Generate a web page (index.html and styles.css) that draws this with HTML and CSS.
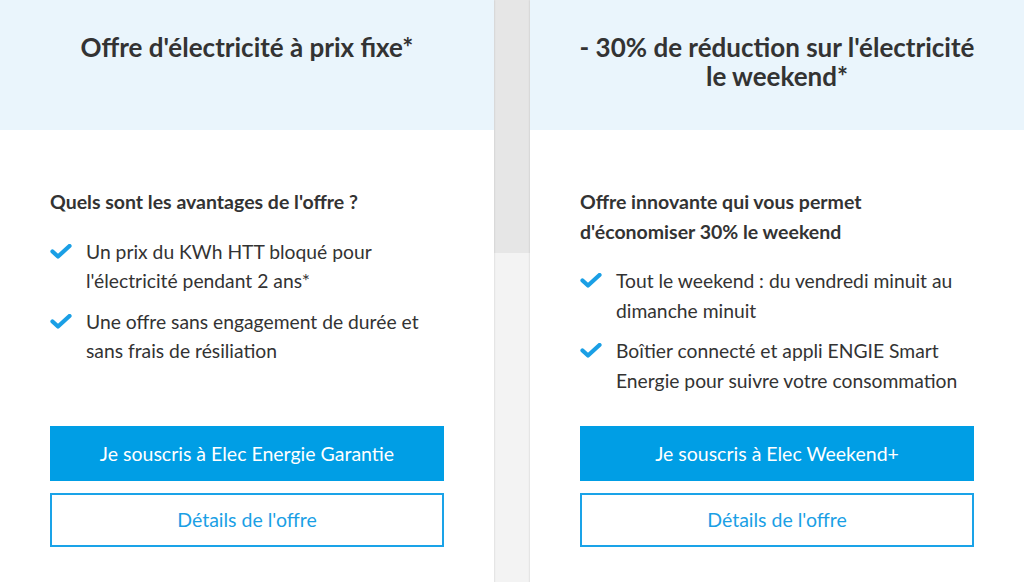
FILE: index.html
```html
<!DOCTYPE html>
<html lang="fr">
<head>
    <meta charset="UTF-8">
    <meta name="viewport" content="width=device-width, initial-scale=1.0">
    <title>Offres électricité</title>
    <link rel="stylesheet" href="styles.css">
</head>
<body>
    <div class="offers">
        <!-- offre prix fixe -->
        <div class="offer-card">
            <div class="offer-header">
                <h2>Offre d'électricité à prix fixe*</h2>
            </div>
            <div class="offer-body">
                <h3>Quels sont les avantages de l'offre ?</h3>
                <ul class="benefits">
                    <li>
                        <svg class="check" viewBox="0 0 22 15"><path d="M2.5 7.5l5.5 5 11.5-10.5"/></svg>
                        <span>Un prix du KWh HTT bloqué pour l'électricité pendant 2 ans*</span>
                    </li>
                    <li>
                        <svg class="check" viewBox="0 0 22 15"><path d="M2.5 7.5l5.5 5 11.5-10.5"/></svg>
                        <span>Une offre sans engagement de durée et sans frais de résiliation</span>
                    </li>
                </ul>
                <div class="actions">
                    <a class="btn btn-primary" href="#">Je souscris à Elec Energie Garantie</a>
                    <a class="btn btn-outline" href="#">Détails de l'offre</a>
                </div>
            </div>
        </div>

        <!-- offre weekend -->
        <div class="offer-card">
            <div class="offer-header">
                <h2>- 30% de réduction sur l'électricité le weekend*</h2>
            </div>
            <div class="offer-body">
                <h3>Offre innovante qui vous permet d'économiser 30% le weekend</h3>
                <ul class="benefits">
                    <li>
                        <svg class="check" viewBox="0 0 22 15"><path d="M2.5 7.5l5.5 5 11.5-10.5"/></svg>
                        <span>Tout le weekend : du vendredi minuit au dimanche minuit</span>
                    </li>
                    <li>
                        <svg class="check" viewBox="0 0 22 15"><path d="M2.5 7.5l5.5 5 11.5-10.5"/></svg>
                        <span>Boîtier connecté et appli ENGIE Smart Energie pour suivre votre consommation</span>
                    </li>
                </ul>
                <div class="actions">
                    <a class="btn btn-primary" href="#">Je souscris à Elec Weekend+</a>
                    <a class="btn btn-outline" href="#">Détails de l'offre</a>
                </div>
            </div>
        </div>
    </div>
</body>
</html>
```

FILE: styles.css
```css
/* page */
body {
    margin: 0;
    font-family: Lato, "Open Sans", Arial, sans-serif;
    color: #333;
    background-color: #f3f3f3;
}

/* two cards side by side, grey strip between */
.offers {
    display: flex;
    gap: 36px;
    background: linear-gradient(#e6e6e6 0, #e6e6e6 253px, #f3f3f3 253px);
}

.offer-card {
    flex: 0 0 494px;
    min-height: 600px;
    display: flex;
    flex-direction: column;
    background: white;
    box-shadow: 0 0 2px rgba(0, 0, 0, 0.18);
}

/* light blue title band */
.offer-header {
    height: 130px;
    box-sizing: border-box;
    padding: 33px 40px 0;
    background-color: #eaf5fc;
    text-align: center;
}

.offer-header h2 {
    margin: 0;
    font-size: 26px;
    font-weight: 700;
    line-height: 29px;
}

.offer-body {
    padding: 57px 50px 0;
    display: flex;
    flex-direction: column;
    height: 360px;
}

.offer-body h3 {
    margin: 0;
    font-size: 19.5px;
    font-weight: 700;
    line-height: 29.5px;
}

/* avantages list */
.benefits {
    list-style: none;
    margin: 20px 0 0;
    padding: 0;
}

.benefits li {
    display: flex;
    align-items: flex-start;
    font-size: 19.3px;
    line-height: 29.5px;
    margin-bottom: 11px;
}

.check {
    flex: 0 0 22px;
    width: 22px;
    height: 15px;
    margin: 7px 14px 0 0;
}

.check path {
    fill: none;
    stroke: #1a9fe5;
    stroke-width: 4.2;
    stroke-linecap: round;
    stroke-linejoin: round;
}

/* buttons pinned to bottom */
.actions {
    margin-top: auto;
    display: flex;
    flex-direction: column;
    gap: 12px;
}

.btn {
    display: block;
    box-sizing: border-box;
    text-align: center;
    text-decoration: none;
    font-size: 19.5px;
    height: 55px;
    line-height: 55px;
}

.btn-primary {
    background-color: #009ee5;
    color: white;
}

.btn-outline {
    height: 54px;
    line-height: 50px;
    border: 2px solid #1aa3e8;
    color: #1a9fe5;
}
```
